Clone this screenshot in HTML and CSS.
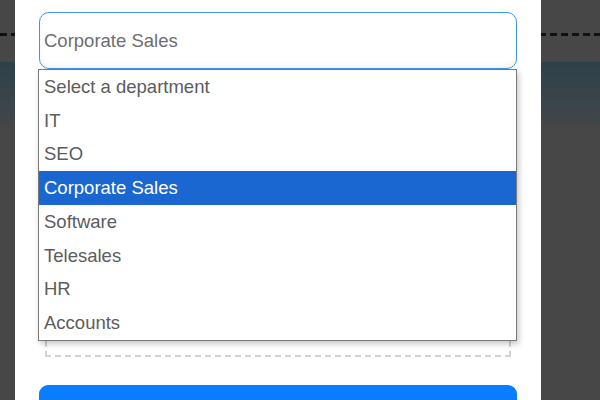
FILE: index.html
```html
<!DOCTYPE html>
<html>
<head>
<meta charset="utf-8">
<link rel="stylesheet" href="styles.css">
</head>
<body>
<div class="page">
  <div class="modal">
    <div class="field">
      <div class="select">Corporate Sales</div>
      <ul class="listbox">
        <li class="opt">Select a department</li>
        <li class="opt">IT</li>
        <li class="opt">SEO</li>
        <li class="opt selected">Corporate Sales</li>
        <li class="opt">Software</li>
        <li class="opt">Telesales</li>
        <li class="opt">HR</li>
        <li class="opt">Accounts</li>
      </ul>
    </div>
    <div class="dropzone"></div>
    <button class="submit" aria-label="Submit"></button>
  </div>
</div>
</body>
</html>
```
FILE: styles.css
```css
html, body {
  margin: 0;
  padding: 0;
}
body {
  font-family: "Liberation Sans", Arial, sans-serif;
  overflow: hidden;
}
.page {
  width: 600px;
  height: 400px;
  overflow: hidden;
  background:
    repeating-linear-gradient(90deg, #111 0 7px, transparent 7px 11px) 0 33px / 100% 3px no-repeat,
    linear-gradient(180deg, #474747 0, #474747 62px, #2e4048 62px, #33434a 80px, #474747 135px, #474747 100%);
  display: flex;
}
.modal {
  margin-left: 15px;
  width: 526px;
  height: 400px;
  flex-shrink: 0;
  overflow: hidden;
  background: #fff;
  box-sizing: border-box;
  padding: 12px 24px 0 24px;
  display: flex;
  flex-direction: column;
}
.field {
  position: relative;
  flex-shrink: 0;
}
.select {
  height: 57px;
  box-sizing: border-box;
  border: 1.5px solid #3f96ec;
  border-radius: 10px;
  padding: 0 0 0 4px;
  display: flex;
  align-items: center;
  font-size: 18.5px;
  color: #6e6e6e;
  background: #fff;
  box-shadow: inset 0 -3px 6px rgba(0,0,0,0.04);
}
.listbox {
  position: absolute;
  left: -1px;
  top: 57px;
  width: 477px;
  margin: 0;
  padding: 0;
  list-style: none;
  border: 1px solid #7a7a7a;
  background: #fff;
  box-shadow: 2px 3px 6px rgba(0,0,0,0.22);
  z-index: 2;
}
.opt {
  height: 33.75px;
  display: flex;
  align-items: center;
  padding-left: 5px;
  font-size: 18.5px;
  color: #5c5c5c;
}
.opt.selected {
  background: #1a67d2;
  color: #fff;
}
.dropzone {
  flex-shrink: 0;
  margin: 18px 6px 0 6px;
  height: 270px;
  border: 2px dashed #d2d2d2;
  box-sizing: border-box;
}
.submit {
  flex-shrink: 0;
  margin-top: 28px;
  height: 56px;
  border: none;
  border-radius: 9px;
  background: #0a7cff;
}
```
